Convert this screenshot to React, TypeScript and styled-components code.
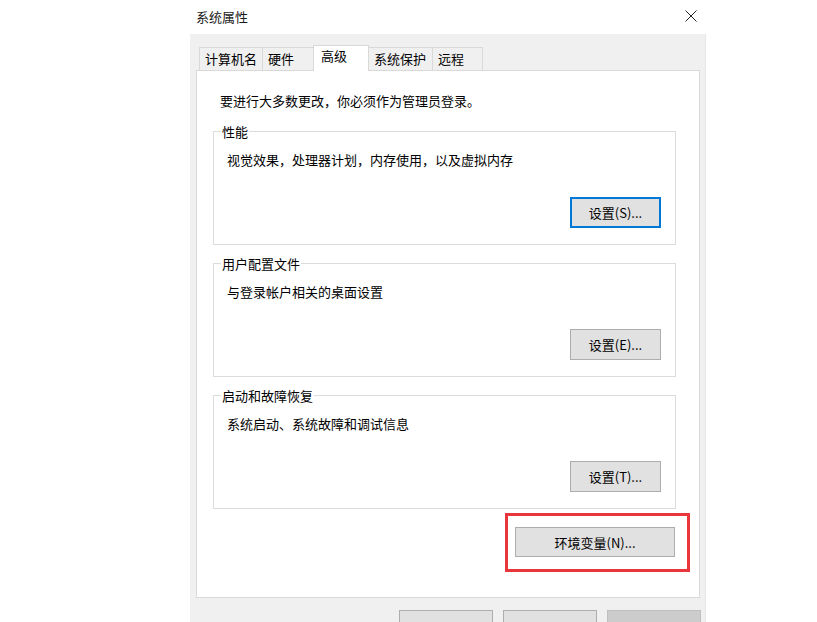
import React from "react";
import styled, { createGlobalStyle, css } from "styled-components";

const GlobalStyle = createGlobalStyle`
  html, body {
    margin: 0;
    padding: 0;
    background: #ffffff;
    overflow: hidden;
  }
  body {
    font-family: "Noto Sans CJK SC", "Noto Sans", sans-serif;
    font-size: 13px;
    color: #000000;
  }
`;

const tabs = [
  { label: "计算机名", w: 64 },
  { label: "硬件", w: 52 },
  { label: "高级", w: 56, active: true },
  { label: "系统保护", w: 65 },
  { label: "远程", w: 51 },
];

const groups = [
  { title: "性能", text: "视觉效果，处理器计划，内存使用，以及虚拟内存", button: "设置(S)...", focused: true },
  { title: "用户配置文件", text: "与登录帐户相关的桌面设置", button: "设置(E)..." },
  { title: "启动和故障恢复", text: "系统启动、系统故障和调试信息", button: "设置(T)..." },
];

export default function App() {
  return (
    <>
      <GlobalStyle />
      <Page>
        <Window>
          <TitleBar>
            <Title>系统属性</Title>
            <CloseIcon viewBox="0 0 12 12" aria-label="关闭">
              <path d="M0.5 0.5 L11.5 11.5 M11.5 0.5 L0.5 11.5" />
            </CloseIcon>
          </TitleBar>

          <DialogBody>
            <TabStrip>
              {tabs.map((t) => (
                <Tab key={t.label} $w={t.w} $active={!!t.active}>
                  {t.label}
                </Tab>
              ))}
            </TabStrip>

            <Panel>
              <Notice>要进行大多数更改，你必须作为管理员登录。</Notice>

              {groups.map((g) => (
                <Group key={g.title}>
                  <GroupLabel>{g.title}</GroupLabel>
                  <GroupText>{g.text}</GroupText>
                  <ButtonRow>
                    <PushButton $w={91} $focused={!!g.focused}>
                      {g.button}
                    </PushButton>
                  </ButtonRow>
                </Group>
              ))}

              <EnvRow>
                <Highlight>
                  <PushButton $w={160} $h={30}>
                    环境变量(N)...
                  </PushButton>
                </Highlight>
              </EnvRow>
            </Panel>

            <Footer>
              <FooterButton aria-label="确定" />
              <FooterButton aria-label="取消" />
              <FooterButton aria-label="应用(A)" $disabled />
            </Footer>
          </DialogBody>
        </Window>
      </Page>
    </>
  );
}

const Page = styled.div`
  display: flex;
  height: 622px;
  padding-left: 190px;
  box-sizing: border-box;
  overflow: hidden;
`;

const Window = styled.div`
  width: 515px;
  display: flex;
  flex-direction: column;
`;

const TitleBar = styled.div`
  height: 34px;
  flex-shrink: 0;
  display: flex;
  align-items: center;
  justify-content: space-between;
  padding: 0 8px 2px 6px;
  box-sizing: border-box;
  background: #ffffff;
`;

const Title = styled.span`
  font-size: 13px;
  line-height: 17px;
  color: #1a1a1a;
`;

const CloseIcon = styled.svg`
  width: 12px;
  height: 12px;
  fill: none;
  stroke: #222222;
  stroke-width: 1;
`;

const DialogBody = styled.div`
  flex: 1;
  background: #f0f0f0;
  padding: 11px 5px 0 6px;
  box-shadow: 1px 0 0 #e6e6e6;
`;

const TabStrip = styled.div`
  display: flex;
  align-items: flex-end;
  height: 25px;
  padding-left: 3px;
`;

const Tab = styled.div<{ $w: number; $active: boolean }>`
  box-sizing: border-box;
  width: ${(p) => p.$w}px;
  height: 23px;
  padding: 2px 0 0 5px;
  margin-right: -1px;
  line-height: 17px;
  font-size: 13px;
  white-space: nowrap;
  background: #f0f0f0;
  border: 1px solid #d9d9d9;
  border-bottom: none;

  ${(p) =>
    p.$active &&
    css`
      position: relative;
      z-index: 1;
      height: 26px;
      margin-bottom: -1px;
      padding: 1px 0 0 7px;
      background: #ffffff;
    `}
`;

const Panel = styled.div`
  box-sizing: border-box;
  width: 504px;
  height: 528px;
  background: #ffffff;
  border: 1px solid #d9d9d9;
  padding: 21px 23px 0 16px;
  display: flex;
  flex-direction: column;
`;

const Notice = styled.div`
  line-height: 17px;
  padding-left: 7px;
  margin-bottom: 14px;
`;

const Group = styled.fieldset`
  margin: 0 0 10px;
  padding: 0 14px 16px 7px;
  border: 1px solid #dcdcdc;
  min-width: 0;
`;

const GroupLabel = styled.legend`
  padding: 0 1px;
  line-height: 17px;
  font-size: 13px;
`;

const GroupText = styled.div`
  line-height: 17px;
  margin: 11px 0 0 6px;
`;

const ButtonRow = styled.div`
  display: flex;
  justify-content: flex-end;
  margin-top: 29px;
`;

const PushButton = styled.button<{ $w: number; $h?: number; $focused?: boolean }>`
  box-sizing: border-box;
  width: ${(p) => p.$w}px;
  height: ${(p) => p.$h ?? 31}px;
  padding: 0;
  background: #e1e1e1;
  border: 1px solid #adadad;
  font-family: "Noto Sans CJK SC", "Noto Sans", sans-serif;
  font-size: 13px;
  color: #000000;
  ${(p) =>
    p.$focused &&
    css`
      border: 2px solid #0078d7;
    `}
`;

const EnvRow = styled.div`
  display: flex;
  justify-content: flex-end;
  margin-top: -6px;
  margin-right: -14px;
`;

const Highlight = styled.div`
  border: 3px solid #e8363c;
  padding: 11px 12px 12px 7px;
`;

const Footer = styled.div`
  display: flex;
  justify-content: flex-end;
  gap: 10px;
  padding-top: 12px;
  margin-right: -1px;
`;

const FooterButton = styled.button<{ $disabled?: boolean }>`
  width: 94px;
  height: 23px;
  padding: 0;
  background: ${(p) => (p.$disabled ? "#cccccc" : "#e1e1e1")};
  border: 1px solid ${(p) => (p.$disabled ? "#bfbfbf" : "#adadad")};
`;
